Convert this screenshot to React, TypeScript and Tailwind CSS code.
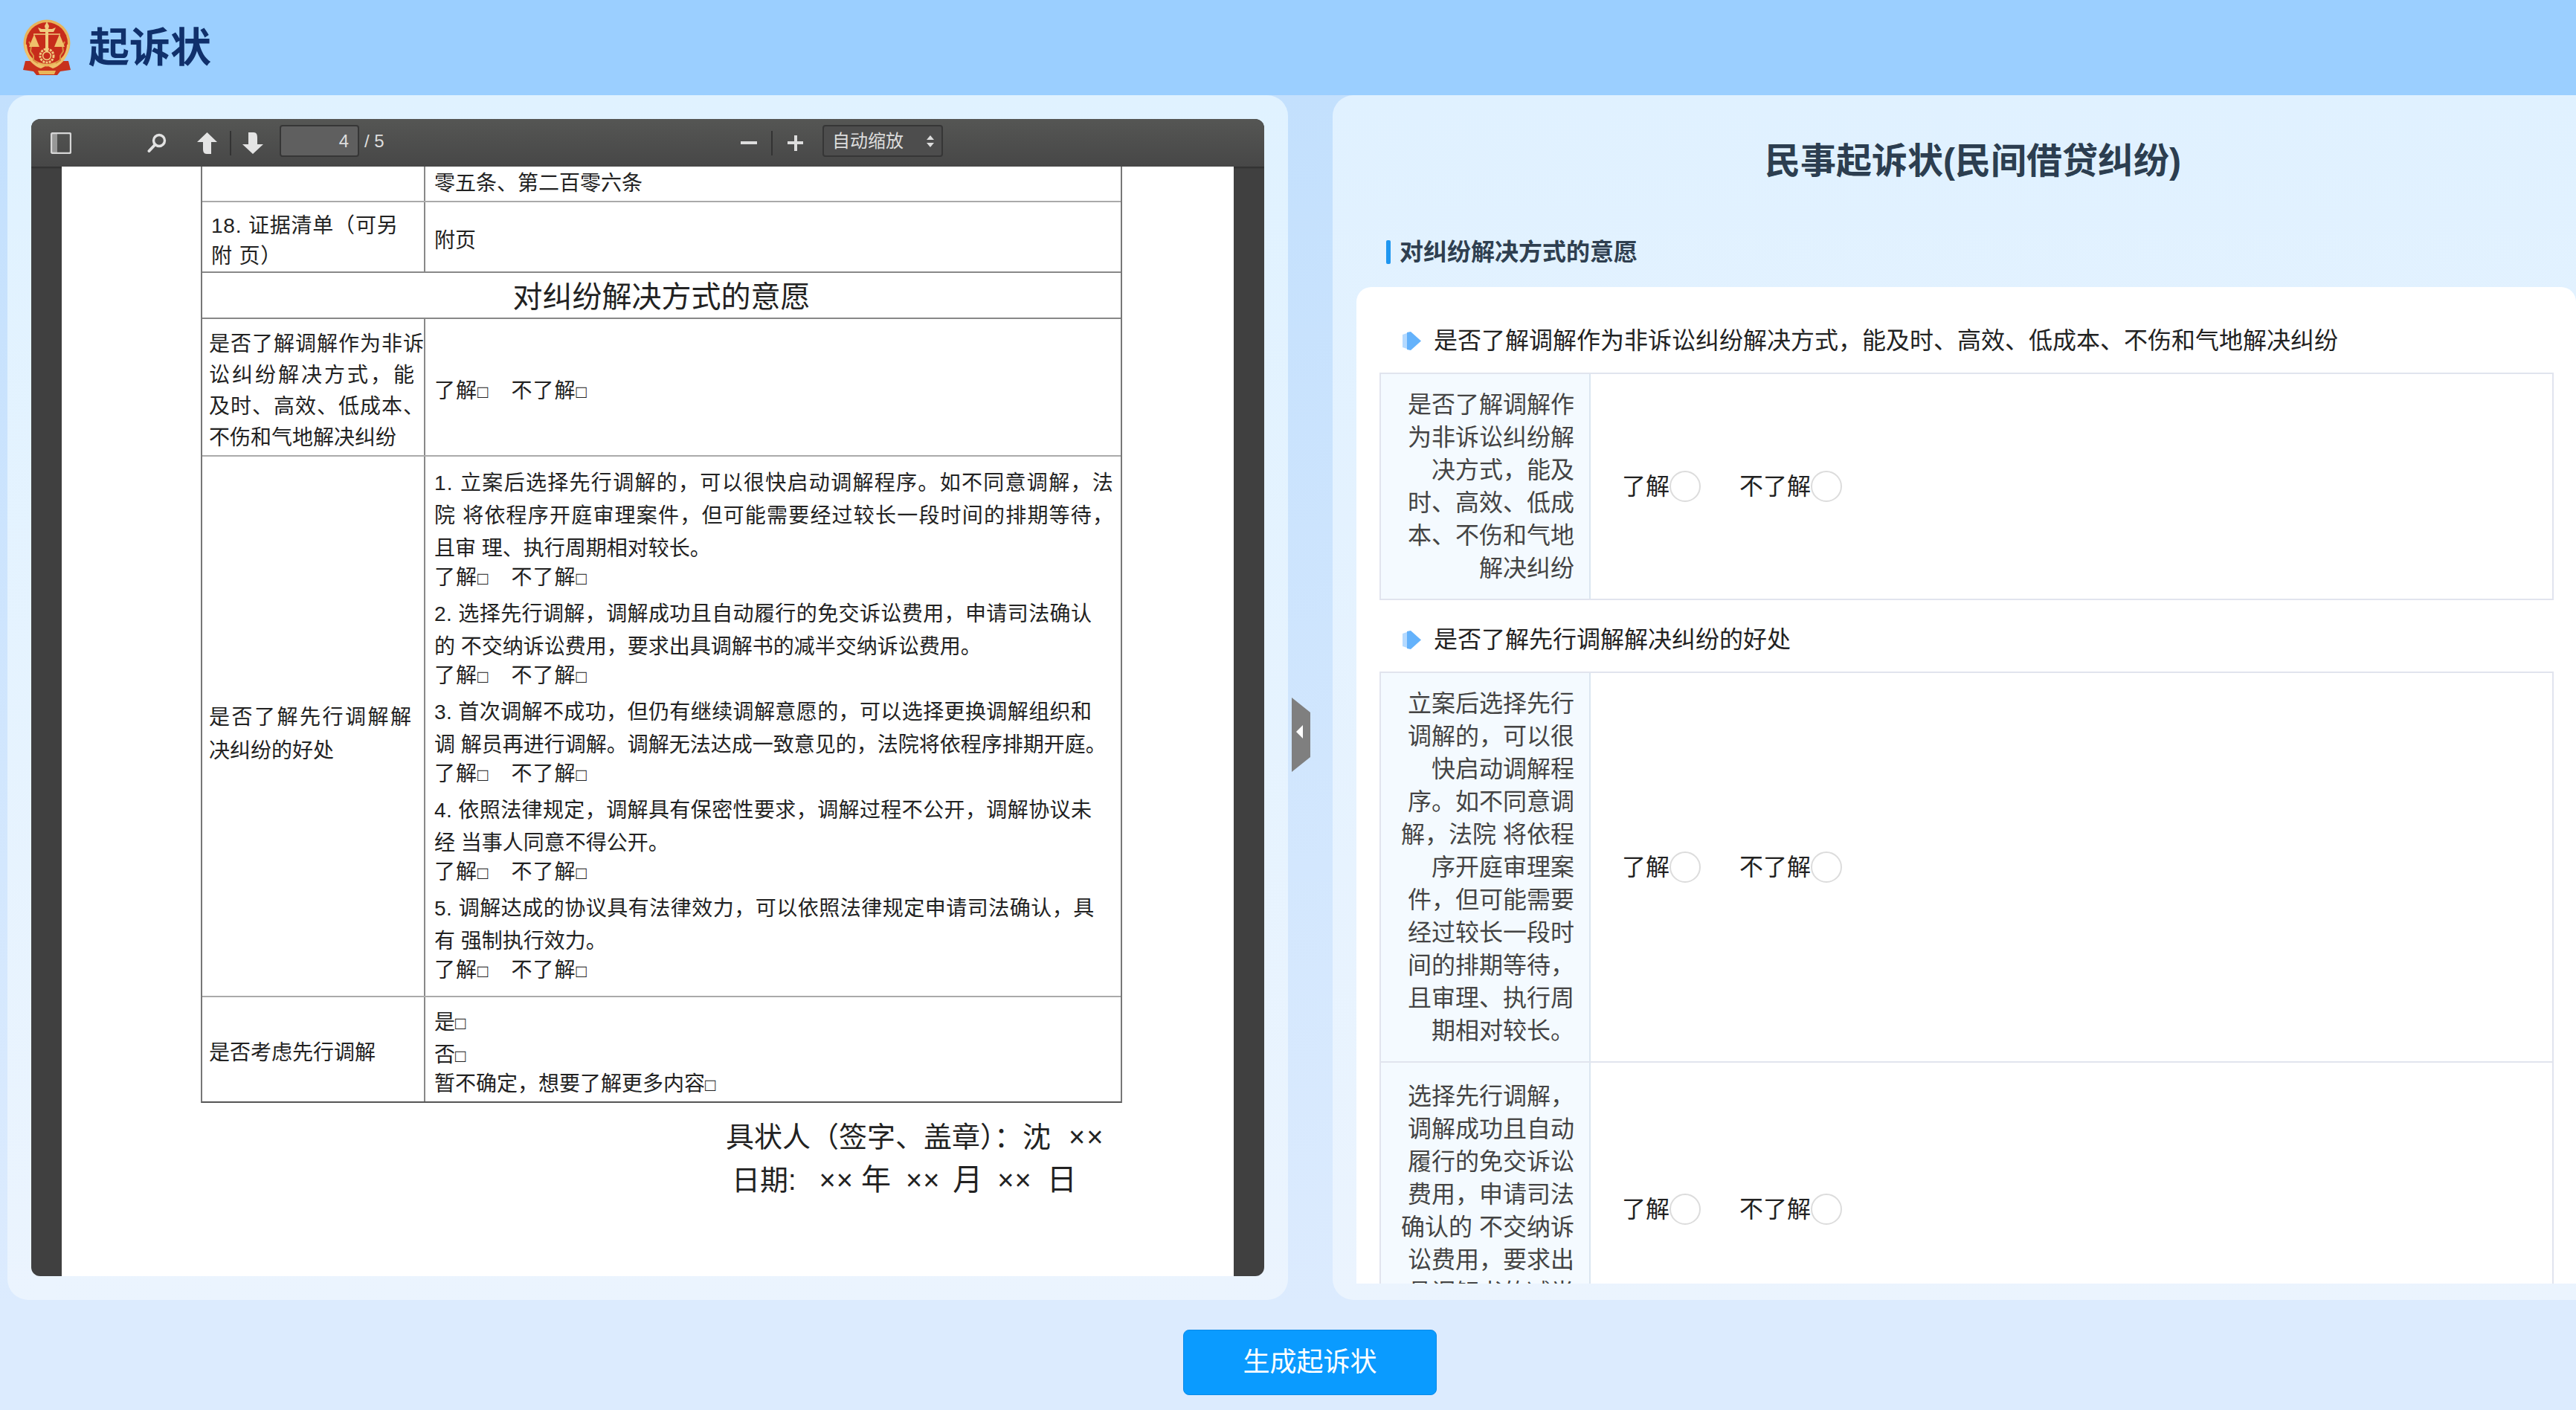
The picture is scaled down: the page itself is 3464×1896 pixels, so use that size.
const Logo = () => (
  <svg width="64" height="76" viewBox="0 0 64 76" className="shrink-0">
    <path d="M3 56 L0 68 L14 70 L18 75 L46 75 L50 70 L64 68 L61 56 Z" fill="#c8321c" />
    <path d="M20 69 H44 L42 74 H22 Z" fill="#e9b658" />
    <circle cx="32" cy="32" r="31.5" fill="#e8b35a" />
    <circle cx="32" cy="32" r="28" fill="#c72c1b" />
    <path d="M5 34 C6 50 16 60 30 63 L24 66 C12 62 2 50 2 34 Z" fill="#efc06a" />
    <path d="M59 34 C58 50 48 60 34 63 L40 66 C52 62 62 50 62 34 Z" fill="#efc06a" />
    <path d="M8 30 l3 6 -1 7 4 6 0 6 6 4" fill="none" stroke="#d98f3f" strokeWidth="2" />
    <path d="M56 30 l-3 6 1 7 -4 6 0 6 -6 4" fill="none" stroke="#d98f3f" strokeWidth="2" />
    <path d="M32 3 l3 6 -1 4 h5 l5 -2 -3 6 h-7 v26 h-4 V17 h-7 l-3 -6 5 2 h5 l-1 -4 Z" fill="#f0cb7f" />
    <path d="M14 20 H50" stroke="#f0cb7f" strokeWidth="1.4" />
    <path d="M15 20 L8 37 H22 Z" fill="#efc06a" />
    <path d="M49 20 L42 37 H56 Z" fill="#efc06a" />
    <circle cx="32" cy="49" r="9" fill="none" stroke="#f0cb7f" strokeWidth="3" strokeDasharray="3 1.2" />
    <circle cx="32" cy="49" r="5.4" fill="#c72c1b" stroke="#f0cb7f" strokeWidth="1.6" />
  </svg>
)

const SidebarIcon = () => (
  <svg width="28" height="29" viewBox="0 0 28 29">
    <rect x="1" y="1" width="26" height="27" rx="2" fill="none" stroke="#d6d6d6" strokeWidth="2.4" />
    <rect x="1" y="1" width="8" height="27" fill="#d6d6d6" fillOpacity="0.55" />
  </svg>
)

const SearchIcon = () => (
  <svg width="26" height="26" viewBox="0 0 26 26">
    <circle cx="16" cy="10" r="7.5" fill="none" stroke="#e2e2e2" strokeWidth="3.4" />
    <path d="M10.5 15.5 L2.5 24" stroke="#e2e2e2" strokeWidth="4" strokeLinecap="round" />
  </svg>
)

const UpIcon = () => (
  <svg width="27" height="29" viewBox="0 0 27 29">
    <path d="M13.5 0 L27 13 H19 V29 H13 C9 29 8 26 8 22 V13 H0 Z" fill="#e4e4e4" />
  </svg>
)

const DownIcon = () => (
  <svg width="28" height="29" viewBox="0 0 28 29">
    <path d="M14 29 L0 16 H8 V0 H15 C19 0 20 3 20 7 V16 H28 Z" fill="#e4e4e4" />
  </svg>
)

const Sep = () => <span className="h-[33px] w-[2px] shrink-0 bg-[#333333]" />

const Toolbar = () => (
  <div className="flex h-[64px] shrink-0 items-center rounded-t-[12px] bg-gradient-to-b from-[#555654] to-[#474747] pl-[26px] text-[24px] text-[#dddddd] shadow-[0_2px_2px_rgba(0,0,0,0.25)]">
    <SidebarIcon />
    <span className="ml-[102px] flex"><SearchIcon /></span>
    <span className="ml-[41px] flex"><UpIcon /></span>
    <span className="ml-[17px] flex"><Sep /></span>
    <span className="ml-[15px] flex"><DownIcon /></span>
    <div className="mb-[5px] ml-[22px] flex h-[43px] w-[107px] items-center justify-end rounded-[4px] border-2 border-[#363636] bg-[#5f5f5f] pr-[12px]">4</div>
    <span className="mb-[5px] ml-[7px] w-[27px] whitespace-nowrap">/ 5</span>
    <span className="ml-[479px] h-[4px] w-[22px] bg-[#dddddd]" />
    <span className="ml-[19px] flex"><Sep /></span>
    <span className="relative ml-[20px] h-[21px] w-[21px]">
      <span className="absolute left-0 top-[8.5px] h-[4px] w-[21px] bg-[#dddddd]" />
      <span className="absolute left-[8.5px] top-0 h-[21px] w-[4px] bg-[#dddddd]" />
    </span>
    <div className="mb-[5px] ml-[26px] flex h-[43px] w-[162px] items-center justify-between rounded-[4px] border-2 border-[#363636] bg-[#4d4d4d] pl-[11px] pr-[10px]">
      <span className="whitespace-nowrap">自动缩放</span>
      <svg width="10" height="16" viewBox="0 0 10 16">
        <path d="M5 0 L10 6 H0 Z M5 16 L10 10 H0 Z" fill="#dddddd" />
      </svg>
    </div>
  </div>
)

const Box = () => <span className="text-[24px] tracking-[-6px]">□</span>

const Know = () => (
  <div className="flex h-[34px] items-baseline leading-[34px]">
    <span className="tracking-[1px]">了解</span>
    <Box />
    <span className="ml-[37px] tracking-[1px]">不了解</span>
    <Box />
  </div>
)

const Para = ({ lines }: { lines: [string, string][] }) => (
  <div className="mb-[10px]">
    {lines.map(([t, c]) => (
      <div key={t} className={`h-[44px] whitespace-pre leading-[44px] ${c}`}>{t}</div>
    ))}
    <Know />
  </div>
)

const PdfPage = () => (
  <div className="flex-1 overflow-hidden bg-white text-[28px] text-[#222222]">
    <div className="ml-[187px] w-[1239px] border-x-2 border-b-2 border-x-[#777777] border-b-[#555555]">
      <div className="flex h-[48px] border-b-2 border-[#aaaaaa]">
        <div className="w-[300px] shrink-0 border-r-2 border-[#888888]" />
        <div className="flex items-center pl-[12px]">零五条、第二百零六条</div>
      </div>
      <div className="flex h-[95px] border-b-2 border-[#888888]">
        <div className="flex w-[300px] shrink-0 flex-col justify-center border-r-2 border-[#888888] pl-[12px] pt-[10px] leading-[41px] tracking-[0.8px]">
          <div>18. 证据清单（可另</div>
          <div>附 页）</div>
        </div>
        <div className="flex items-center pl-[12px] pt-[11px]">附页</div>
      </div>
      <div className="flex h-[62px] items-center justify-center border-b-2 border-[#888888] pt-[3px] text-[40px]">对纠纷解决方式的意愿</div>
      <div className="flex h-[185px] border-b-2 border-[#aaaaaa]">
        <div className="flex w-[300px] shrink-0 flex-col justify-center overflow-hidden whitespace-nowrap border-r-2 border-[#888888] pl-[9px] pt-[10px] leading-[42px]">
          <div className="tracking-[1px]">是否了解调解作为非诉</div>
          <div className="tracking-[3px]">讼纠纷解决方式，能</div>
          <div className="tracking-[1px]">及时、高效、低成本、</div>
          <div>不伤和气地解决纠纷</div>
        </div>
        <div className="flex items-center pl-[12px] pt-[10px]"><Know /></div>
      </div>
      <div className="flex h-[727px] border-b-2 border-[#aaaaaa]">
        <div className="flex w-[300px] shrink-0 flex-col justify-center whitespace-nowrap border-r-2 border-[#888888] pl-[9px] pt-[20px] leading-[45px]">
          <div className="tracking-[2.5px]">是否了解先行调解解</div>
          <div>决纠纷的好处</div>
        </div>
        <div className="pl-[12px] pt-[14px]">
          <Para lines={[
            ['1. 立案后选择先行调解的，可以很快启动调解程序。如不同意调解，法', 'tracking-[1.3px]'],
            ['院 将依程序开庭审理案件，但可能需要经过较长一段时间的排期等待，', 'tracking-[1.2px]'],
            ['且审 理、执行周期相对较长。', ''],
          ]} />
          <Para lines={[
            ['2. 选择先行调解，调解成功且自动履行的免交诉讼费用，申请司法确认', 'tracking-[0.4px]'],
            ['的 不交纳诉讼费用，要求出具调解书的减半交纳诉讼费用。', ''],
          ]} />
          <Para lines={[
            ['3. 首次调解不成功，但仍有继续调解意愿的，可以选择更换调解组织和', 'tracking-[0.4px]'],
            ['调 解员再进行调解。调解无法达成一致意见的，法院将依程序排期开庭。', ''],
          ]} />
          <Para lines={[
            ['4. 依照法律规定，调解具有保密性要求，调解过程不公开，调解协议未', 'tracking-[0.4px]'],
            ['经 当事人同意不得公开。', ''],
          ]} />
          <Para lines={[
            ['5. 调解达成的协议具有法律效力，可以依照法律规定申请司法确认，具', 'tracking-[0.5px]'],
            ['有 强制执行效力。', ''],
          ]} />
        </div>
      </div>
      <div className="flex h-[140px]">
        <div className="flex w-[300px] shrink-0 items-center border-r-2 border-[#888888] pl-[9px] pt-[10px]">是否考虑先行调解</div>
        <div className="pl-[12px] pt-[12px]">
          <div className="h-[44px] leading-[44px]">是<Box /></div>
          <div className="h-[44px] leading-[44px]">否<Box /></div>
          <div className="h-[34px] leading-[34px]">暂不确定，想要了解更多内容<Box /></div>
        </div>
      </div>
    </div>
    <div className="mt-[18px] text-[38px] leading-[57px]">
      <div className="ml-[893px] whitespace-nowrap">具状人（签字、盖章）：沈<span className="ml-[24px] tracking-[2px]">××</span></div>
      <div className="ml-[901px] whitespace-nowrap">
        日期:
        <span className="ml-[31px] tracking-[1px]">××</span>
        <span className="ml-[10px] text-[40px]">年</span>
        <span className="ml-[20px] tracking-[1px]">××</span>
        <span className="ml-[17px] text-[40px]">月</span>
        <span className="ml-[20px] tracking-[1px]">××</span>
        <span className="ml-[20px] text-[40px]">日</span>
      </div>
    </div>
  </div>
)

const Viewer = () => (
  <div className="flex h-[1556px] flex-col overflow-hidden rounded-[12px] bg-[#404040]">
    <Toolbar />
    <div className="flex min-h-0 flex-1 px-[41px]">
      <PdfPage />
    </div>
  </div>
)

const Arrow = () => (
  <svg width="25" height="25" viewBox="0 0 25 25" className="shrink-0">
    <path d="M0 4 L6 2 V23 L0 21 Z" fill="#b5daff" />
    <path d="M6 1 L11 0 L25 12.5 L11 25 L6 24 Z" fill="#64b2fb" />
  </svg>
)

const Question = ({ text }: { text: string }) => (
  <div className="mb-[21px] flex h-[44px] items-center pl-[62px] text-[32px] text-[#222222]">
    <Arrow />
    <span className="ml-[17px] whitespace-nowrap">{text}</span>
  </div>
)

const Radio = () => <span className="h-[42px] w-[42px] shrink-0 rounded-full border-2 border-[#dcdcdc] bg-white" />

const FormRow = ({ label, top = 'pt-[19px]' }: { label: string; top?: string }) => (
  <div className="flex border-b-2 border-[#e1e4ee]">
    <div className={`w-[282px] shrink-0 border-r-2 border-[#dbe6f0] bg-[#f4faff] pb-[19px] pl-[22px] pr-[20px] text-right text-[32px] leading-[44px] text-[#444444] ${top}`}>
      {label}
    </div>
    <div className="flex items-center pl-[42px] text-[32px] text-[#222222]">
      <span>了解</span>
      <Radio />
      <span className="ml-[52px]">不了解</span>
      <Radio />
    </div>
  </div>
)

export default function App() {
  return (
    <div lang="zh-CN" className="flex h-[1896px] w-[3464px] flex-col overflow-hidden bg-[#dcebfe] font-['Liberation_Sans','Noto_Sans_CJK_SC',sans-serif]">
      <header className="flex h-[128px] shrink-0 items-center bg-[#9bcfff] pl-[31px]">
        <Logo />
        <h1 className="ml-[24px] text-[55px] font-bold text-[#10306b]">起诉状</h1>
      </header>

      <main className="flex h-[1620px] shrink-0 bg-gradient-to-b from-[#c3e0fd] to-[#dcebfe] pl-[10px]">
        <section className="w-[1722px] shrink-0 rounded-[28px] bg-gradient-to-b from-[#e0f2ff] to-[#ebf4fe] p-[32px]">
          <Viewer />
        </section>

        <div className="relative w-[60px] shrink-0">
          <svg width="25" height="100" viewBox="0 0 25 100" className="absolute left-[5px] top-[810px]">
            <path d="M0 0 L25 20 V80 L0 100 Z" fill="#7f7f7f" />
            <path d="M15 37 L6 46 L15 55 Z" fill="#ffffff" />
          </svg>
        </div>

        <section className="flex min-w-0 flex-1 flex-col rounded-l-[28px] bg-gradient-to-b from-[#e0f1ff] to-[#ebf4fe]">
          <h2 className="mt-[57px] pl-[50px] text-center text-[48px] font-bold leading-[64px] text-[#2c3e50]">民事起诉状(民间借贷纠纷)</h2>
          <div className="ml-[72px] mt-[74px] flex h-[32px] items-center">
            <span className="h-[32px] w-[6px] rounded-[2px] bg-[#1e96f0]" />
            <span className="ml-[12px] text-[32px] font-semibold text-[#2f3f50]">对纠纷解决方式的意愿</span>
          </div>
          <div className="ml-[32px] mt-[31px] h-[1340px] overflow-hidden rounded-t-[20px] bg-white pt-[50px]">
            <Question text="是否了解调解作为非诉讼纠纷解决方式，能及时、高效、低成本、不伤和气地解决纠纷" />
            <div className="ml-[31px] mr-[30px] border-x-2 border-t-2 border-[#e1e4ee]">
              <FormRow label="是否了解调解作为非诉讼纠纷解决方式，能及时、高效、低成本、不伤和气地解决纠纷" />
            </div>
            <div className="mt-[31px]">
              <Question text="是否了解先行调解解决纠纷的好处" />
            </div>
            <div className="ml-[31px] mr-[30px] border-x-2 border-t-2 border-[#e1e4ee]">
              <FormRow label="立案后选择先行调解的，可以很快启动调解程序。如不同意调解，法院 将依程序开庭审理案件，但可能需要经过较长一段时间的排期等待，且审理、执行周期相对较长。" />
              <FormRow top="pt-[23px]" label="选择先行调解，调解成功且自动履行的免交诉讼费用，申请司法确认的 不交纳诉讼费用，要求出具调解书的减半交纳诉讼费用。" />
            </div>
          </div>
        </section>
      </main>

      <footer className="flex flex-1 justify-center pl-[59px] pt-[40px]">
        <button className="h-[88px] w-[341px] rounded-[8px] border border-[#0a8ae8] bg-[#0a9bff] text-[36px] text-white">生成起诉状</button>
      </footer>
    </div>
  )
}
